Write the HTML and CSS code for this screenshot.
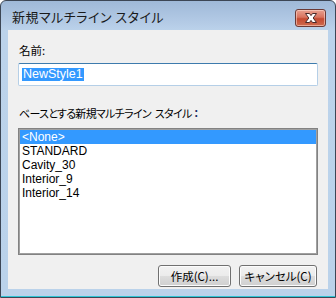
FILE: index.html
```html
<!DOCTYPE html>
<html>
<head>
<meta charset="utf-8">
<link rel="stylesheet" href="styles.css">
</head>
<body>
<div class="window">
  <div class="titlebar">
    <span class="title">新規マルチライン スタイル</span>
    <button class="close" aria-label="閉じる">
      <svg width="16" height="12" viewBox="0 0 16 12">
        <path d="M2.5 1.5 L6.5 1.5 L8 3.6 L9.5 1.5 L13.5 1.5 L10.2 6 L13.5 10.5 L9.5 10.5 L8 8.4 L6.5 10.5 L2.5 10.5 L5.8 6 Z" fill="#fff" stroke="#4a2a2a" stroke-width="1" stroke-linejoin="round"/>
      </svg>
    </button>
  </div>
  <div class="client">
    <div class="label first">名前:</div>
    <div class="input"><span class="sel">NewStyle1</span></div>
    <div class="label second">ベースとする新規マルチライン<span class="gap">スタイル</span><span class="colon">：</span></div>
    <ul class="listbox">
      <li class="selected">&lt;None&gt;</li>
      <li>STANDARD</li>
      <li>Cavity_30</li>
      <li>Interior_9</li>
      <li>Interior_14</li>
    </ul>
    <div class="buttons">
      <button class="btn create">作成(C)...</button>
      <button class="btn cancel">キャンセル(C)</button>
    </div>
  </div>
</div>
</body>
</html>
```

FILE: styles.css
```css
html, body {
  margin: 0;
  padding: 0;
  background: #ffffff;
}
body {
  width: 336px;
  height: 298px;
  overflow: hidden;
  font-family: "Noto Sans CJK JP", "Liberation Sans", sans-serif;
}
.window {
  box-sizing: border-box;
  width: 336px;
  height: 298px;
  border: 1px solid #3c4655;
  border-radius: 6px 6px 0 0;
  background: linear-gradient(#9fb9d8 0px, #b4cbe6 22px, #bcd3eb 30px, #bad2ea 100%);
  padding: 0 7px 8px 7px;
  box-shadow: inset 0 -1px 0 #2fc4d4;
  display: flex;
  flex-direction: column;
}
.titlebar {
  height: 29px;
  display: flex;
  align-items: center;
  justify-content: space-between;
  padding-left: 4px;
  padding-right: 2px;
}
.title {
  font-size: 13px;
  color: #1a1a1a;
  font-feature-settings: "palt";
  letter-spacing: 0.5px;
  margin-top: 1px;
}
.close {
  width: 31px;
  height: 18px;
  margin-top: 5px;
  padding: 0;
  border: 1px solid #6b3a36;
  border-radius: 3px;
  background: linear-gradient(#e8a190 0%, #d9735f 45%, #c44a31 55%, #cf6b4f 100%);
  box-shadow: inset 0 0 0 1px rgba(255, 220, 210, 0.55);
  display: flex;
  align-items: center;
  justify-content: center;
}
.close svg { display: block; }
.client {
  flex: 1;
  background: #f0f0f0;
  padding: 0 10px;
  display: flex;
  flex-direction: column;
}
.label {
  font-size: 11.5px;
  line-height: 14px;
  color: #000;
  font-feature-settings: "palt";
  padding-left: 1px;
}
.label.first {
  margin-top: 13px;
}
.label.second {
  margin-top: 20px;
  font-size: 11px;
  letter-spacing: -0.7px;
}
.gap {
  margin-left: 4px;
}
.colon {
  color: #1a2a60;
  font-weight: bold;
  margin-left: 2px;
}
.input {
  box-sizing: border-box;
  margin-top: 6px;
  width: 300px;
  height: 23px;
  background: #fff;
  border: 1px solid #b5cfe7;
  border-top-color: #3d7bad;
  border-radius: 2px;
  padding: 4px 0 0 3px;
  font-family: "Liberation Sans", sans-serif;
  font-size: 12.5px;
  line-height: 13px;
}
.sel {
  background: #3399ff;
  color: #fff;
  padding: 0 1px;
  display: inline-block;
}
.listbox {
  box-sizing: border-box;
  list-style: none;
  margin: 8px 0 0 0;
  padding: 1px;
  width: 300px;
  height: 127px;
  background: #fff;
  border: 1px solid #828282;
  box-shadow: inset 0 0 0 1px #a0a0a0;
  font-family: "Liberation Sans", sans-serif;
  font-size: 12px;
}
.listbox li {
  height: 14px;
  line-height: 14px;
  padding-left: 2px;
  color: #000;
}
.listbox li.selected {
  background: #3399ff;
  color: #fff;
}
.buttons {
  display: flex;
  justify-content: flex-end;
  gap: 8px;
  margin-top: 10px;
  padding-right: 1px;
}
.btn {
  box-sizing: border-box;
  height: 22px;
  padding: 0;
  border: 1px solid #707070;
  border-radius: 3px;
  background: linear-gradient(#f2f2f2 0%, #ebebeb 50%, #dddddd 51%, #cfcfcf 100%);
  box-shadow: inset 0 0 0 1px #fcfcfc;
  font-family: "Noto Sans CJK JP", "Liberation Sans", sans-serif;
  font-feature-settings: "palt";
  font-size: 11.5px;
  line-height: 18px;
  color: #000;
}
.btn.create { width: 73px; }
.btn.cancel { width: 78px; }
```
